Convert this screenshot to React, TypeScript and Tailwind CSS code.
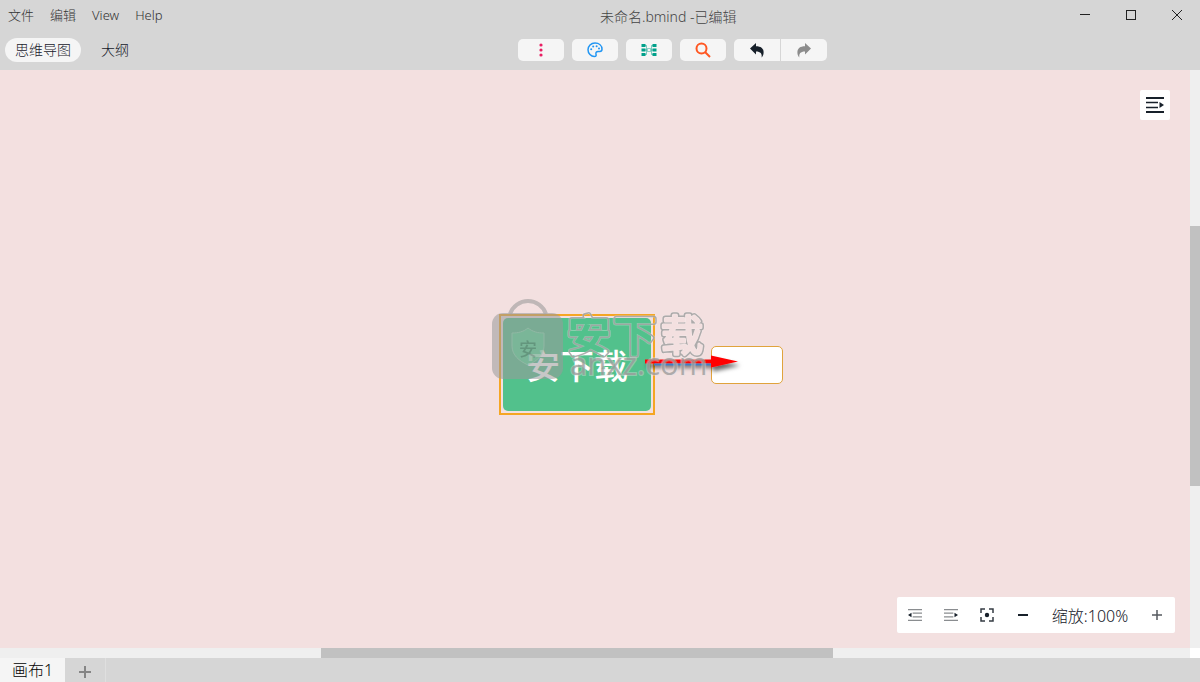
import type { ReactNode } from 'react'

const menus = ['文件', '编辑', 'View', 'Help']

const toolButton = 'flex h-[22px] w-[46px] items-center justify-center bg-[#f5f5f5]'

function IconButton({ label, className, children }: { label: string; className: string; children: ReactNode }) {
  return (
    <button type="button" aria-label={label} title={label} className={className}>
      {children}
    </button>
  )
}

function PaletteIcon() {
  return (
    <svg width="16" height="16" viewBox="0 0 16 16" fill="none" stroke="#2196f3" strokeWidth="1.5">
      <path d="M8 1C4 1 1 4 1 7.7c0 3.8 3.1 6.8 6.3 6.8 1.8 0 2.1-1 1.7-2.3-.5-1.5.5-2.7 2-2.7h1.8c1.5 0 2.2-.9 2.2-2.2C15 3.5 12 1 8 1z" />
      <g fill="#2196f3" stroke="none">
        <circle cx="4.2" cy="7.2" r="1" />
        <circle cx="6.2" cy="4.4" r="1" />
        <circle cx="9.6" cy="4.2" r="1" />
        <circle cx="12" cy="6.5" r="1" />
      </g>
    </svg>
  )
}

function StructureIcon() {
  return (
    <svg width="16" height="14" viewBox="0 0 16 14">
      <g fill="#00a08a">
        <rect x="0.5" y="1" width="4" height="3" />
        <rect x="0.5" y="5.5" width="4" height="3" />
        <rect x="0.5" y="10" width="4" height="3" />
        <rect x="11.5" y="1" width="4" height="3" />
        <rect x="11.5" y="5.5" width="4" height="3" />
        <rect x="11.5" y="10" width="4" height="3" />
      </g>
      <path d="M4 2.500h1.500v9H4M12 2.500h-1.500v9H12M4 7h8" fill="none" stroke="#00a08a" strokeOpacity="0.5" />
      <rect x="6.5" y="5.5" width="3" height="3" fill="#f5f5f5" stroke="#8fcfc6" />
    </svg>
  )
}

function UndoIcon({ color, flip = false }: { color: string; flip?: boolean }) {
  return (
    <svg width="14" height="16" viewBox="0 0 14 16" fill={color} className={flip ? '-scale-x-100' : ''}>
      <path d="M6 1v3.200c4.800 0 7.600 2 7.600 6.200 0 2-.7 3.600-2 5.100.6-4-1-6.100-5.600-6.100v3.200L0 6.500z" />
    </svg>
  )
}

function IndentIcon({ left = false, strong = false }: { left?: boolean; strong?: boolean }) {
  const size = strong ? 18 : 14
  const line = strong ? '#17202a' : '#8a8d90'
  return (
    <svg width={size} height={size} viewBox="0 0 18 18" className={left ? '-scale-x-100' : ''}>
      <path d="M0 2h18M0 16h18" fill="none" stroke={line} strokeWidth={strong ? 2 : 1.5} />
      <path d="M0 6.500h12M0 11.500h12" fill="none" stroke={line} strokeWidth={1.5} />
      <path d="M13.500 6v6l4.500-3z" fill="#17202a" />
    </svg>
  )
}

function FocusIcon() {
  return (
    <svg width="14" height="14" viewBox="0 0 14 14" fill="none" stroke="#343b43" strokeWidth="1.5">
      <path d="M1 5V1h4M9 1h4v4M13 9v4H9M5 13H1V9" />
      <circle cx="7" cy="7" r="2.2" fill="#17202a" stroke="none" />
    </svg>
  )
}

// paints only the band between two stroke widths, so the glyphs read as hollow
function OutlineMask({ id, outer, inner }: { id: string; outer: number; inner: number }) {
  return (
    <mask id={id} maskUnits="userSpaceOnUse" x="70" y="0" width="146" height="88">
      <g fontFamily="'Noto Sans CJK SC', sans-serif" fontSize="42" fontWeight="400" strokeLinejoin="round">
        <g fill="white" stroke="white" strokeWidth={outer}>
          <text x="77" y="54">安</text>
          <text x="123" y="54">下</text>
          <text x="170" y="54">载</text>
        </g>
        <g fill="black" stroke="black" strokeWidth={inner}>
          <text x="77" y="54">安</text>
          <text x="123" y="54">下</text>
          <text x="170" y="54">载</text>
        </g>
      </g>
    </mask>
  )
}

function Watermark() {
  return (
    <svg width="216" height="88" viewBox="0 0 216 88" className="pointer-events-none absolute top-[227px] left-[491px]">
      <defs>
        <OutlineMask id="halo" outer={7} inner={2} />
        <OutlineMask id="edge" outer={6} inner={3} />
      </defs>
      <g opacity="0.8">
        <path d="M19 17a19 19 0 0 1 36 0" fill="none" stroke="#b3adad" strokeWidth="4" />
        <rect x="1" y="16" width="71" height="66" rx="11" fill="#9a9a9a" fillOpacity="0.7" />
        <path d="M37 31c5 4 10 5 16 5v13c0 9-7 15-16 19-9-4-16-10-16-19V36c6 0 11-1 16-5z" fill="#85b49c" stroke="#a0b5aa" />
        <text x="28" y="59" fontFamily="'Noto Sans CJK SC', sans-serif" fontSize="18" fontWeight="500" fill="#688c7a">安</text>
      </g>
      <rect x="70" width="146" height="88" fill="#fff" fillOpacity="0.3" mask="url(#halo)" />
      <rect x="70" width="146" height="88" fill="#a0a0a0" fillOpacity="0.85" mask="url(#edge)" />
      <text x="79" y="78" fontFamily="'Open Sans', sans-serif" fontSize="31" fontWeight="400" fill="#999" fillOpacity="0.75" stroke="#e6e0e0" strokeOpacity="0.4" strokeWidth="2" paintOrder="stroke">
        anxz.com
      </text>
    </svg>
  )
}

function Connector() {
  return (
    <svg width="144" height="34" viewBox="0 0 144 34" className="pointer-events-none absolute top-[277px] left-[640px]">
      <defs>
        <filter id="shadow" x="-10%" y="-80%" width="120%" height="300%">
          <feDropShadow dx="2" dy="4" stdDeviation="2" floodColor="#000" floodOpacity="0.6" />
        </filter>
      </defs>
      <path d="M5 12.500h66v-4l27 6-27 6v-4H5z" fill="#f00" filter="url(#shadow)" />
      <path d="M14 17.500h57" stroke="#3f7fc4" strokeWidth="2" />
    </svg>
  )
}

export default function App() {
  return (
    <div className="flex h-screen min-h-96 flex-col bg-[#d6d6d6] font-['Noto_Sans','Noto_Sans_CJK_SC',sans-serif] font-light text-[#17202a]">
      <header className="h-[70px] shrink-0">
        <div className="flex h-[30px] items-center text-[13px] text-[#333]">
          <nav className="flex w-1/2 gap-4 pt-px pl-2">
            {menus.map((name) => (
              <button key={name} type="button">{name}</button>
            ))}
          </nav>
          <h1 className="flex-1 pt-1 text-sm text-[#444]">未命名.bmind -已编辑</h1>
          <div className="flex">
            <IconButton label="最小化" className="flex h-[30px] w-[46px] items-center justify-center">
              <svg width="12" height="12" stroke="#222"><path d="M1 5.500h10" /></svg>
            </IconButton>
            <IconButton label="最大化" className="flex h-[30px] w-[46px] items-center justify-center">
              <svg width="12" height="12" fill="none" stroke="#222"><rect x="1.5" y="1.5" width="9" height="9" /></svg>
            </IconButton>
            <IconButton label="关闭" className="flex h-[30px] w-[46px] items-center justify-center">
              <svg width="12" height="12" stroke="#222"><path d="M1 1l10 10M11 1L1 11" /></svg>
            </IconButton>
          </div>
        </div>

        <div className="flex h-10 items-center">
          <div className="flex w-[43%] items-center pl-[5px] text-sm">
            <button type="button" className="h-6 rounded-full bg-[#f5f5f5] px-[10px]">思维导图</button>
            <button type="button" className="h-6 px-5">大纲</button>
          </div>
          <div className="flex gap-2 pl-0.5">
            <IconButton label="更多" className={`${toolButton} rounded-[5px]`}>
              <svg width="4" height="14" fill="#e91e63">
                <circle cx="2" cy="2" r="1.6" />
                <circle cx="2" cy="7" r="1.6" />
                <circle cx="2" cy="12" r="1.6" />
              </svg>
            </IconButton>
            <IconButton label="主题" className={`${toolButton} rounded-[5px]`}>
              <PaletteIcon />
            </IconButton>
            <IconButton label="结构" className={`${toolButton} rounded-[5px]`}>
              <StructureIcon />
            </IconButton>
            <IconButton label="搜索" className={`${toolButton} rounded-[5px]`}>
              <svg width="16" height="16" fill="none" stroke="#ff5722" strokeWidth="2">
                <circle cx="6.5" cy="6.5" r="5" />
                <path d="M10 10l5 5" />
              </svg>
            </IconButton>
            <div className="flex gap-px">
              <IconButton label="撤销" className={`${toolButton} rounded-l-[5px]`}>
                <UndoIcon color="#17202a" />
              </IconButton>
              <IconButton label="重做" className={`${toolButton} rounded-r-[5px]`}>
                <UndoIcon color="#8c8c8c" flip />
              </IconButton>
            </div>
          </div>
        </div>
      </header>

      <div className="flex min-h-0 flex-1">
        <main className="relative flex-1 overflow-hidden bg-[#f3e0e0]">
          <div className="absolute top-[244px] left-[499px] border-2 border-[#f5a623] p-0.5">
            <div className="flex h-[93px] w-[148px] items-center justify-center rounded-[5px] bg-[#52c18c] pt-1 text-[34px] font-medium text-white">
              安下载
            </div>
          </div>
          <div className="absolute top-[276px] left-[711px] h-[38px] w-[72px] rounded-[5px] border border-[#e0a33c] bg-white" />
          <Connector />
          <Watermark />

          <IconButton label="展开面板" className="absolute top-5 right-5 flex size-[30px] items-center justify-center rounded-xs bg-white">
            <IndentIcon strong />
          </IconButton>

          <div className="absolute right-[15px] bottom-[15px] flex h-9 items-center rounded-xs bg-white">
            <IconButton label="收起" className="flex size-9 items-center justify-center"><IndentIcon left /></IconButton>
            <IconButton label="展开" className="flex size-9 items-center justify-center"><IndentIcon /></IconButton>
            <IconButton label="居中" className="flex size-9 items-center justify-center"><FocusIcon /></IconButton>
            <IconButton label="缩小" className="flex size-9 items-center justify-center">
              <svg width="12" height="12" stroke="#17202a" strokeWidth="2"><path d="M1 6h10" /></svg>
            </IconButton>
            <span className="w-[98px] pt-px text-center text-base">缩放:100%</span>
            <IconButton label="放大" className="flex size-9 items-center justify-center">
              <svg width="12" height="12" stroke="#555a5f" strokeWidth="1.5"><path d="M1 6h10M6 1v10" /></svg>
            </IconButton>
          </div>
        </main>
        <div className="flex w-[10px] flex-col bg-[#efefef]">
          <div className="h-[27%]" />
          <div className="h-[45%] bg-[#c1c1c1]" />
        </div>
      </div>

      <div className="flex h-[10px] shrink-0 bg-white">
        <div className="mr-[10px] flex flex-1 bg-[#efefef]">
          <div className="w-[27%]" />
          <div className="w-[43%] bg-[#c1c1c1]" />
        </div>
      </div>

      <footer className="flex h-6 shrink-0">
        <button type="button" className="w-[65px] bg-[#f5f5f5] text-base text-black">画布1</button>
        <IconButton label="新建画布" className="flex w-[41px] items-center justify-center border-r border-[#dfdfdf] pt-1">
          <svg width="12" height="12" stroke="#858585" strokeWidth="2"><path d="M0 6h12M6 0v12" /></svg>
        </IconButton>
      </footer>
    </div>
  )
}
